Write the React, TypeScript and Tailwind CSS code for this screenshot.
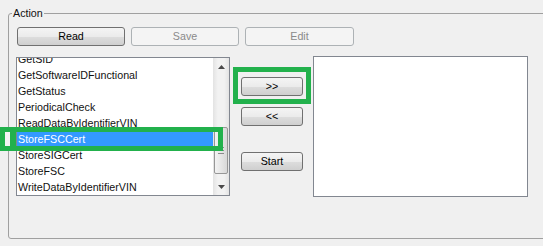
import React from 'react';

const items = [
  'GetSID',
  'GetSoftwareIDFunctional',
  'GetStatus',
  'PeriodicalCheck',
  'ReadDataByIdentifierVIN',
  'StoreFSCCert',
  'StoreSIGCert',
  'StoreFSC',
  'WriteDataByIdentifierVIN',
];

const Btn = ({ label, width, disabled }: { label: string; width: string; disabled?: boolean }) => (
  <div
    className={`${width} h-[19px] flex items-center justify-center rounded-[3px] border ${
      disabled
        ? 'border-[#adb2b5] bg-[#f4f4f4] text-[#8a8a8a]'
        : 'border-[#707070] bg-[linear-gradient(to_bottom,#f4f4f4_0%,#ebebeb_50%,#dddddd_51%,#cfcfcf_100%)] text-black'
    }`}
  >
    {label}
  </div>
);

const Arrow = ({ up }: { up?: boolean }) => (
  <svg width="7" height="4" viewBox="0 0 7 4">
    <path d={up ? 'M0 4 L3.5 0 L7 4 Z' : 'M0 0 L3.5 4 L7 0 Z'} fill="#4a4a4a" />
  </svg>
);

export default function App() {
  return (
    <div className="relative w-[543px] h-[246px] overflow-hidden bg-[#f0f0f0] pt-[13px] pl-[8px] font-['Liberation_Sans',Arial,sans-serif] text-[10.7px] text-[#111]">
      <div className="relative w-[560px] h-[226px] rounded-[3px] border border-[#a0a0a0]">
        <span className="absolute left-[3px] top-[-8px] bg-[#f0f0f0] px-[1px] leading-[14px]">Action</span>
        <div className="pt-[13px] pl-[7px]">
          <div className="flex gap-[6px] pl-[1px]">
            <Btn label="Read" width="w-[108px]" />
            <Btn label="Save" width="w-[108px]" disabled />
            <Btn label="Edit" width="w-[109px]" disabled />
          </div>
          <div className="flex items-start mt-[11px]">
            {/* left list */}
            <div className="flex w-[214px] h-[139px] border border-[#828790] bg-white">
              <div className="flex-1 overflow-hidden">
                <div className="-mt-[7px]">
                  {items.map((it) => (
                    <div
                      key={it}
                      className={`h-[16px] leading-[16px] pl-[1px] whitespace-nowrap ${
                        it === 'StoreFSCCert' ? 'bg-[#3399ff] text-white' : ''
                      }`}
                    >
                      {it}
                    </div>
                  ))}
                </div>
              </div>
              <div className="flex w-[16px] flex-col bg-[linear-gradient(to_right,#e3e3e3,#f2f2f2_30%,#f2f2f2_70%,#e3e3e3)]">
                <div className="flex h-[17px] items-center justify-center">
                  <Arrow up />
                </div>
                <div className="flex-1">
                  <div className="mt-[52px] ml-[1px] h-[47px] w-[14px] rounded-[2px] border border-[#979797] bg-[linear-gradient(to_right,#f3f3f3,#e6e6e6_50%,#d8d8d8)] flex flex-col items-center justify-center gap-[2px]">
                    <div className="h-px w-[6px] bg-[#8a8a8a]" />
                    <div className="h-px w-[6px] bg-[#8a8a8a]" />
                    <div className="h-px w-[6px] bg-[#8a8a8a]" />
                  </div>
                </div>
                <div className="flex h-[17px] items-center justify-center">
                  <Arrow />
                </div>
              </div>
            </div>
            {/* middle buttons */}
            <div className="ml-[11px] flex w-[62px] flex-col pt-[20px]">
              <Btn label=">>" width="w-[62px]" />
              <div className="mt-[11px]">
                <Btn label="<<" width="w-[62px]" />
              </div>
              <div className="mt-[26px]">
                <Btn label="Start" width="w-[62px]" />
              </div>
            </div>
            {/* right list */}
            <div className="ml-[10px] -mt-[1px] w-[215px] h-[141px] border border-[#828790] bg-white" />
          </div>
        </div>
      </div>

      {/* highlight frames */}
      <div className="absolute left-0 top-[127px] w-[223px] h-[24px] border-[5px] border-[#22b14c]">
        <div className="absolute left-0 top-0 h-full w-[5px] bg-[#f4f4f4]" />
        <div className="absolute left-[5px] top-0 h-full w-[6px] bg-[#22b14c]" />
      </div>
      <div className="absolute left-[233px] top-[67px] w-[78px] h-[37px] border-[5px] border-[#22b14c]" />
    </div>
  );
}
